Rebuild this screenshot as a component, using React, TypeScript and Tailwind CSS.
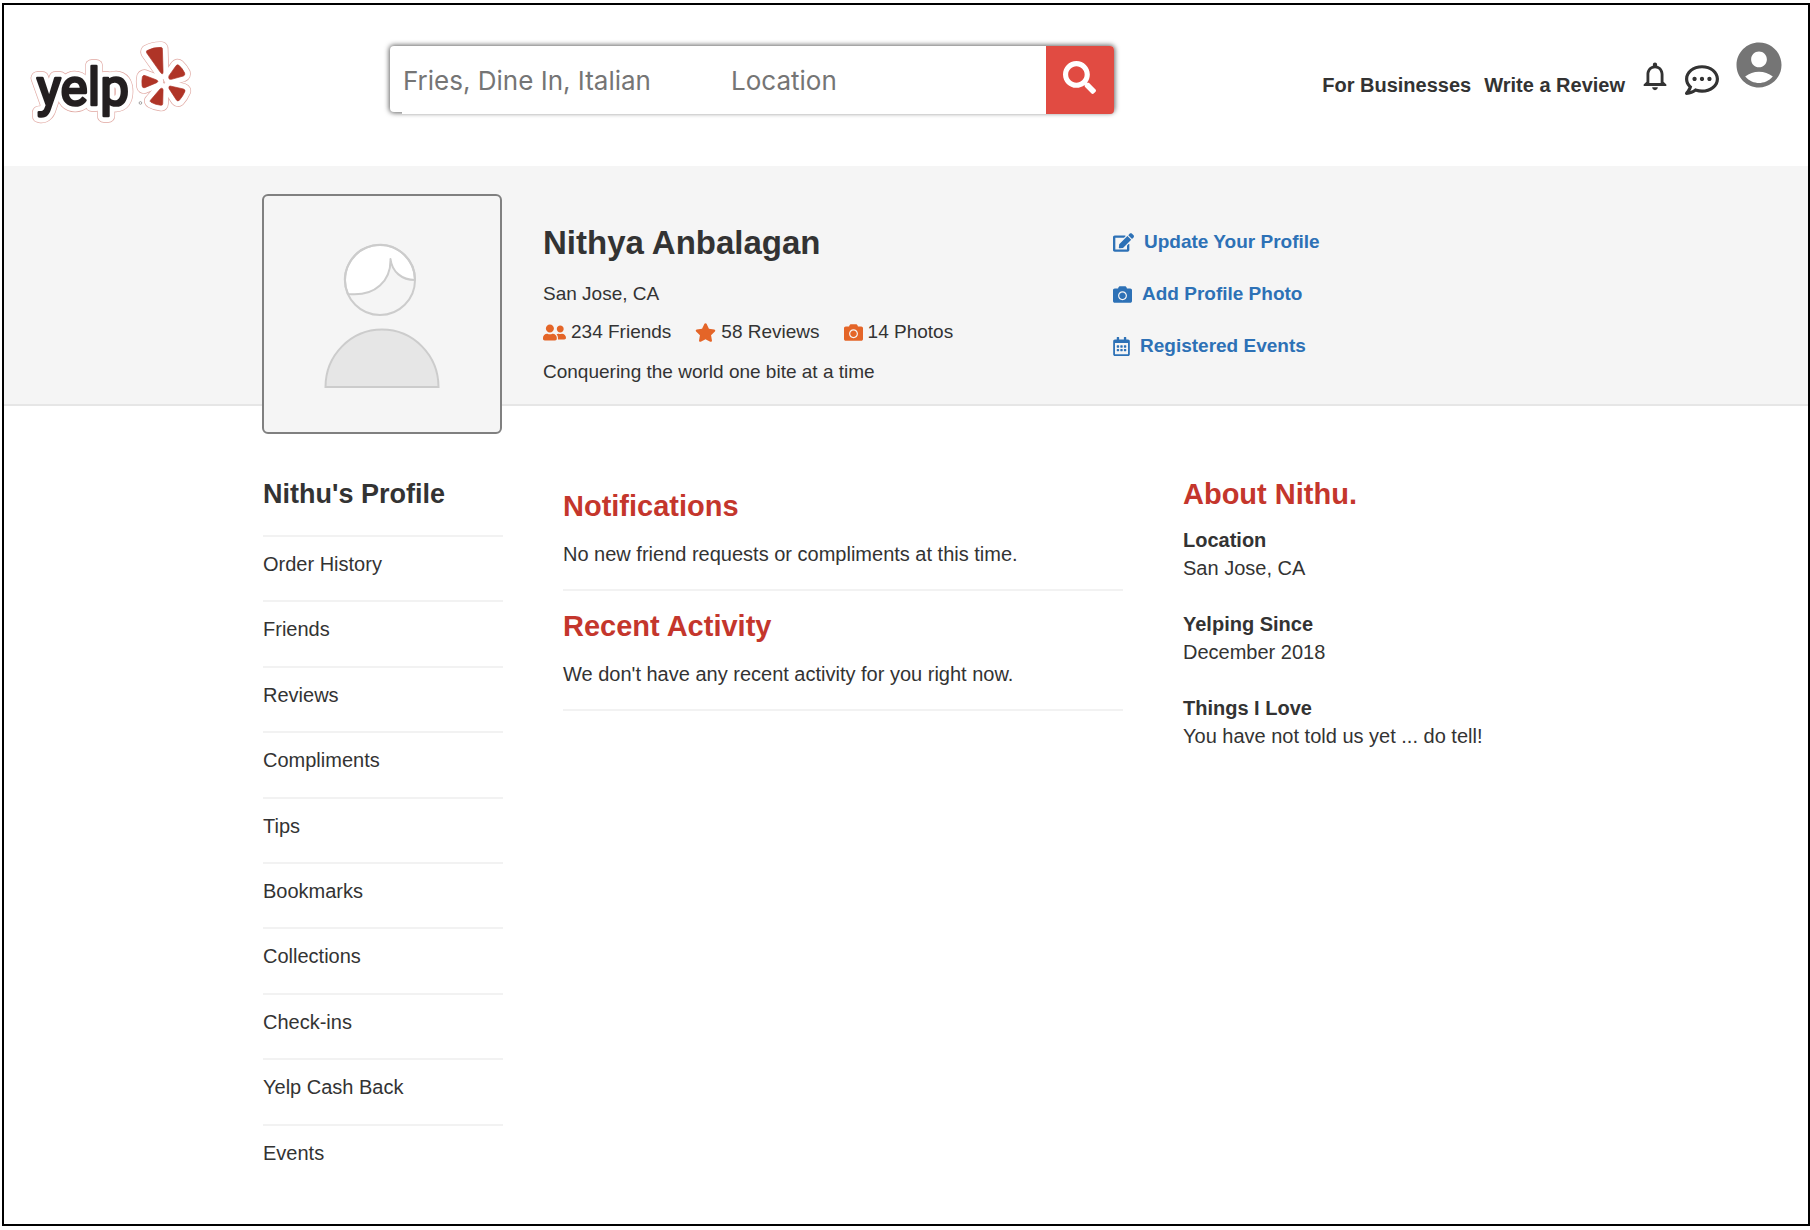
import React from "react";
import {
  FaCamera,
  FaEdit,
  FaRegCalendarAlt,
  FaRegCommentDots,
  FaSearch,
  FaStar,
  FaUserFriends,
} from "react-icons/fa";
import { MdAccountCircle, MdNotificationsNone } from "react-icons/md";

const menu = [
  "Order History",
  "Friends",
  "Reviews",
  "Compliments",
  "Tips",
  "Bookmarks",
  "Collections",
  "Check-ins",
  "Yelp Cash Back",
  "Events",
];

const about = [
  { term: "Location", value: "San Jose, CA" },
  { term: "Yelping Since", value: "December 2018" },
  { term: "Things I Love", value: "You have not told us yet ... do tell!" },
];

function BurstPetals() {
  return (
    <>
      <path d="M442 153 Q462 142 486 143 Q489 144 489 148 L491 216 Q491 228 483 218 L442 160 Q440 156 442 153Z" />
      <path d="M429 231 Q432 225 438 228 L472 241 Q479 245 472 249 L436 264 Q429 266 428 259 Q426 245 429 231Z" />
      <path d="M453 302 L482 268 Q490 262 491 271 L490 312 Q490 318 484 317 Q467 315 455 308 Q450 305 453 302Z" />
      <path d="M512 259 L552 268 Q560 271 556 277 Q550 291 540 302 Q535 306 531 301 L509 267 Q507 259 512 259Z" />
      <path d="M509 228 L530 198 Q534 193 539 197 Q549 206 556 220 Q558 227 552 229 L516 239 Q505 240 509 228Z" />
    </>
  );
}

function WordMark({ strokeWidth }: { strokeWidth: number }) {
  return (
    <text
      x="111"
      y="315"
      fontFamily="Roboto, sans-serif"
      fontWeight="400"
      fontSize="154"
      strokeWidth={strokeWidth}
    >
      yelp
    </text>
  );
}

function Logo() {
  return (
    <svg
      viewBox="88 124 490 240"
      className="h-20 w-[163px] overflow-visible"
      aria-hidden="true"
      strokeLinejoin="round"
    >
      <g fill="#e0a8a2" stroke="#e0a8a2" strokeWidth="36">
        <WordMark strokeWidth={40} />
        <BurstPetals />
      </g>
      <g fill="#ffffff" stroke="#ffffff" strokeWidth="32">
        <WordMark strokeWidth={36} />
        <BurstPetals />
      </g>
      <g fill="#231f20" stroke="#231f20">
        <WordMark strokeWidth={8} />
      </g>
      <circle cx="423" cy="310" r="4" fill="none" stroke="#777777" strokeWidth="2" />
      <g fill="#af3427" stroke="#af3427" strokeWidth="2">
        <BurstPetals />
      </g>
    </svg>
  );
}

function ProfilePicture() {
  return (
    <div className="-mb-[30px] size-60 rounded-md border-2 border-[#808080] bg-[#f5f5f5]">
      <svg viewBox="0 0 236 236" className="size-full" role="img" aria-label="Profile picture" stroke="#cccccc" strokeWidth="2">
        <path
          d="M84 98 C112 101 127 84 126.500 63 C128 76 138 84 151 84 A35 35 0 1 0 84 98Z"
          fill="#ffffff"
          strokeLinejoin="round"
        />
        <circle cx="116" cy="84" r="35" fill="none" />
        <path d="M61.500 191 A56 57 0 0 1 174.500 191 Z" fill="#e6e6e6" />
      </svg>
    </div>
  );
}

function Header() {
  return (
    <header className="flex h-[161px] items-start pr-[22px] pl-[25px]">
      <a href="#home" aria-label="yelp" className="mt-9 shrink-0">
        <Logo />
      </a>
      <form className="mt-[41px] mr-10 ml-[198px] flex h-[66px] w-full max-w-[724px] items-start rounded-sm bg-white pl-3 shadow-[0_0_5px_1px_#666]">
        <input
          type="text"
          aria-label="Search for"
          placeholder="Fries, Dine In, Italian"
          className="h-[68px] w-[328px] shrink bg-white pl-px font-['Inter',sans-serif] text-[26px] text-[#333] outline-none placeholder:text-[#757575]"
        />
        <input
          type="text"
          aria-label="Location"
          placeholder="Location"
          className="h-[68px] min-w-0 flex-1 bg-white pl-px font-['Inter',sans-serif] text-[26px] text-[#333] outline-none placeholder:text-[#757575]"
        />
        <button
          type="submit"
          aria-label="Search"
          className="flex h-[68px] w-[68px] shrink-0 justify-center rounded-r-sm bg-[#e14b42] pt-[15px] pr-[2px] text-white"
        >
          <FaSearch className="size-[33px]" />
        </button>
      </form>
      <nav className="ml-auto flex shrink-0 items-start gap-[13px] pt-[33px] text-xl/6 font-bold">
        <a href="#business" className="mt-[35px]">
          For Businesses
        </a>
        <a href="#review" className="mt-[35px]">
          Write a Review
        </a>
        <button type="button" aria-label="Notifications" className="mt-[21px]">
          <MdNotificationsNone className="size-[34px]" />
        </button>
        <button type="button" aria-label="Messages" className="mt-[25px]">
          <FaRegCommentDots className="size-[34px]" />
        </button>
        <button type="button" aria-label="Account" className="text-[#757575]">
          <MdAccountCircle className="size-[54px]" />
        </button>
      </nav>
    </header>
  );
}

function Banner() {
  return (
    <section className="border-b-2 border-[#e6e6e6] bg-[#f5f5f5] pt-7">
      <div className="mx-auto grid max-w-[1288px] grid-cols-[240px_1fr_437px] text-[19px]/[22px]">
        <ProfilePicture />
        <div className="h-0 pt-[29px] pl-[41px]">
          <h1 className="text-[33px]/10 font-bold">Nithya Anbalagan</h1>
          <p className="mt-5">San Jose, CA</p>
          <ul className="mt-4 flex gap-6">
            <li className="flex items-center gap-[5px]">
              <FaUserFriends className="h-[19px] w-[23px] text-[#e46528]" />
              234 Friends
            </li>
            <li className="flex items-center gap-[5px]">
              <FaStar className="h-[19px] w-[21px] text-[#e46528]" />
              58 Reviews
            </li>
            <li className="flex items-center gap-[5px]">
              <FaCamera className="size-[19px] text-[#e46528]" />
              14 Photos
            </li>
          </ul>
          <p className="mt-[18px]">Conquering the world one bite at a time</p>
        </div>
        <div className="flex h-0 flex-col gap-[30px] pt-[37px] font-bold text-[#2d71b6]">
          <a href="#update" className="flex items-center gap-[10px]">
            <FaEdit className="h-[19px] w-[21px]" />
            Update Your Profile
          </a>
          <a href="#photo" className="flex items-center gap-[10px]">
            <FaCamera className="size-[19px]" />
            Add Profile Photo
          </a>
          <a href="#events" className="flex items-center gap-[10px]">
            <FaRegCalendarAlt className="h-[19px] w-[17px]" />
            Registered Events
          </a>
        </div>
      </div>
    </section>
  );
}

function Notice({ title, text }: { title: string; text: string }) {
  return (
    <section className="border-b-2 border-[#f2f2f2] pt-[18px] pb-[23px]">
      <h2 className="text-[29px]/[34px] font-bold text-[#c4362c]">{title}</h2>
      <p className="mt-[19px]">{text}</p>
    </section>
  );
}

export default function App() {
  return (
    <div className="flex min-h-screen bg-white pt-[3px] pb-1 pl-[2px] font-['Liberation_Sans',Arial,sans-serif] text-[#333]">
      <div className="w-full border-2 border-black">
        <Header />
        <Banner />
        <main className="mx-auto grid max-w-[1286px] grid-cols-[240px_560px_1fr] items-start gap-x-[60px] pt-[65px] text-xl/6">
          <aside className="pt-[6px]">
            <h2 className="text-[27px]/[34px] font-bold">Nithu's Profile</h2>
            <ul className="mt-6 grid min-h-[654px] auto-rows-fr">
              {menu.map((item) => (
                <li key={item} className="border-t-2 border-[#f2f2f2] pt-[15px]">
                  <a href="#menu">{item}</a>
                </li>
              ))}
            </ul>
          </aside>
          <div>
            <Notice title="Notifications" text="No new friend requests or compliments at this time." />
            <Notice title="Recent Activity" text="We don't have any recent activity for you right now." />
          </div>
          <section className="pt-[6px]">
            <h2 className="text-[29px]/[34px] font-bold text-[#c4362c]">About Nithu.</h2>
            <dl className="mt-[15px] flex flex-col gap-7 text-xl/7">
              {about.map(({ term, value }) => (
                <div key={term}>
                  <dt className="font-bold">{term}</dt>
                  <dd>{value}</dd>
                </div>
              ))}
            </dl>
          </section>
        </main>
      </div>
    </div>
  );
}
